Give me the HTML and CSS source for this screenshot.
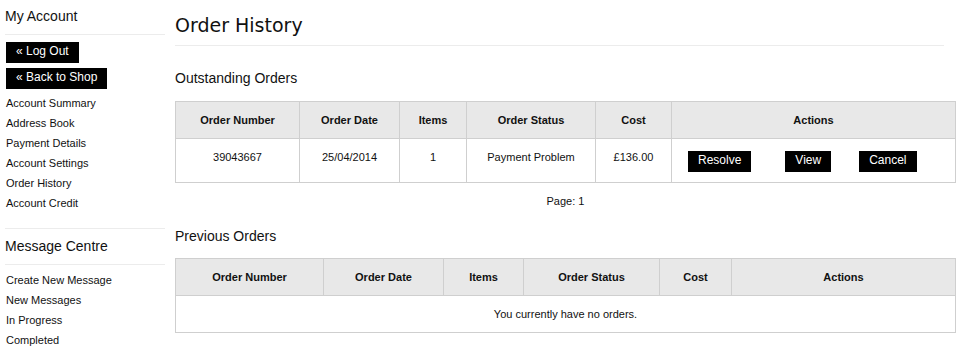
FILE: index.html
```html
<!DOCTYPE html>
<html lang="en">
<head>
    <meta charset="UTF-8">
    <title>Order History</title>
    <link rel="stylesheet" href="styles.css">
</head>
<body>
    <div class="layout">
        <div class="sidebar">
            <div class="side-section">
                <h2 class="side-title">My Account</h2>
                <a class="side-btn" href="#">&laquo; Log Out</a>
                <a class="side-btn" href="#">&laquo; Back to Shop</a>
                <ul class="side-links">
                    <li><a href="#">Account Summary</a></li>
                    <li><a href="#">Address Book</a></li>
                    <li><a href="#">Payment Details</a></li>
                    <li><a href="#">Account Settings</a></li>
                    <li><a href="#">Order History</a></li>
                    <li><a href="#">Account Credit</a></li>
                </ul>
            </div>
            <div class="side-section">
                <h2 class="side-title">Message Centre</h2>
                <ul class="side-links">
                    <li><a href="#">Create New Message</a></li>
                    <li><a href="#">New Messages</a></li>
                    <li><a href="#">In Progress</a></li>
                    <li><a href="#">Completed</a></li>
                </ul>
            </div>
        </div>

        <div class="main">
            <h1 class="page-title">Order History</h1>

            <h3 class="section-title">Outstanding Orders</h3>
            <table class="orders">
                <colgroup>
                    <col class="c-num1"><col class="c-date1"><col class="c-items1"><col class="c-status1"><col class="c-cost1"><col>
                </colgroup>
                <tr>
                    <th>Order Number</th><th>Order Date</th><th>Items</th><th>Order Status</th><th>Cost</th><th>Actions</th>
                </tr>
                <tr>
                    <td>39043667</td>
                    <td>25/04/2014</td>
                    <td>1</td>
                    <td>Payment Problem</td>
                    <td>&pound;136.00</td>
                    <td class="actions-cell">
                        <div class="actions">
                            <a class="btn" href="#">Resolve</a>
                            <a class="btn btn-view" href="#">View</a>
                            <a class="btn" href="#">Cancel</a>
                        </div>
                    </td>
                </tr>
            </table>
            <p class="pager">Page: 1</p>

            <h3 class="section-title prev">Previous Orders</h3>
            <table class="orders">
                <colgroup>
                    <col class="c-num2"><col class="c-date2"><col class="c-items2"><col class="c-status2"><col class="c-cost2"><col>
                </colgroup>
                <tr>
                    <th>Order Number</th><th>Order Date</th><th>Items</th><th>Order Status</th><th>Cost</th><th>Actions</th>
                </tr>
                <tr>
                    <td colspan="6">You currently have no orders.</td>
                </tr>
            </table>
        </div>
    </div>
</body>
</html>
```

FILE: styles.css
```css
* { box-sizing: border-box; margin: 0; padding: 0; }
body { font-family: "Liberation Sans", Arial, sans-serif; color: #111; background: #fff; }
a { color: #111; text-decoration: none; }

.layout { display: flex; align-items: flex-start; padding-left: 5px; }

/* sidebar */
.sidebar { width: 160px; flex: none; }
.side-section:first-child { padding-bottom: 15px; border-bottom: 1px solid #ececec; }
.side-title { font-size: 14px; font-weight: normal; line-height: 20px; margin-top: 6px; padding-bottom: 8px; border-bottom: 1px solid #ececec; }
.side-section + .side-section .side-title { margin-top: 7px; }
.side-btn { display: block; width: fit-content; margin: 7px 0 0 1px; padding: 2px 10px 4px; background: #000; color: #fff; font-size: 12px; line-height: 15px; }
.side-btn + .side-btn { margin-top: 5px; }
.side-links { list-style: none; margin-top: 4px; padding-left: 1px; }
.side-title + .side-links { margin-top: 5px; }
.side-links li { font-size: 11px; line-height: 20px; }

/* main */
.main { width: 781px; margin-left: 10px; }
.page-title { font-family: "DejaVu Sans", sans-serif; font-weight: normal; font-size: 19px; line-height: 28px; margin: 11px 12px 0 0; padding-bottom: 6px; border-bottom: 1px solid #ececec; }
.section-title { font-size: 14px; font-weight: normal; line-height: 20px; margin: 22px 0 13px; }
.section-title.prev { margin: 15px 0 12px; }

.orders { width: 100%; border-collapse: collapse; table-layout: fixed; }
.orders th, .orders td { border: 1px solid #cfcfcf; text-align: center; line-height: 14px; padding: 11px 4px; }
.orders th { background: #e8e8e8; font-size: 11px; font-weight: bold; vertical-align: middle; }
.orders td { font-size: 11px; vertical-align: top; }
.orders td.actions-cell { text-align: left; padding: 12px 4px 10px 16px; }

.c-num1 { width: 124px; } .c-date1 { width: 100px; } .c-items1 { width: 67px; } .c-status1 { width: 129px; } .c-cost1 { width: 76px; }
.c-num2 { width: 148px; } .c-date2 { width: 120px; } .c-items2 { width: 80px; } .c-status2 { width: 136px; } .c-cost2 { width: 72px; }

.actions { display: flex; }
.btn { display: block; padding: 2px 10px 4px; background: #000; color: #fff; font-size: 12px; line-height: 15px; }
.btn-view { margin: 0 28px 0 34px; }

.pager { text-align: center; font-size: 11px; line-height: 20px; margin-top: 8px; }
```
